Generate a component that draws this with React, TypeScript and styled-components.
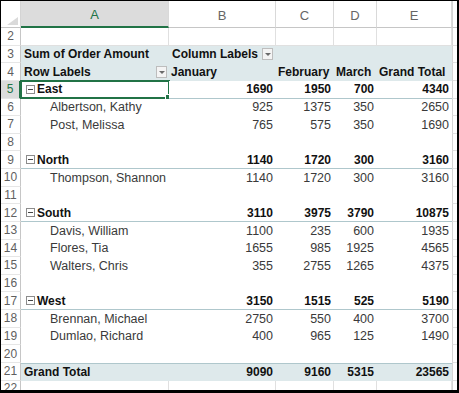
import React from 'react';
import styled, { createGlobalStyle, css } from 'styled-components';

const GlobalStyle = createGlobalStyle`
  html, body {
    margin: 0;
    padding: 0;
    background: #fff;
  }
  body {
    font-family: 'Liberation Sans', Arial, sans-serif;
  }
`;

const COLS = '20px 148px 107px 58px 43px 75px 1fr';
const ROW_H = 17.63;
const GREEN = '#217346';
const BAND = '#dee9eb';
const LINE = '#afc7cc';
const GRID = '#e0e0e0';

type Kind = 'blank' | 'title' | 'head' | 'region' | 'item' | 'empty' | 'total';

type Line = {
  n: number;
  kind: Kind;
  label?: string;
  values?: number[];
};

const lines: Line[] = [
  { n: 2, kind: 'blank' },
  { n: 3, kind: 'title' },
  { n: 4, kind: 'head' },
  { n: 5, kind: 'region', label: 'East', values: [1690, 1950, 700, 4340] },
  { n: 6, kind: 'item', label: 'Albertson, Kathy', values: [925, 1375, 350, 2650] },
  { n: 7, kind: 'item', label: 'Post, Melissa', values: [765, 575, 350, 1690] },
  { n: 8, kind: 'empty' },
  { n: 9, kind: 'region', label: 'North', values: [1140, 1720, 300, 3160] },
  { n: 10, kind: 'item', label: 'Thompson, Shannon', values: [1140, 1720, 300, 3160] },
  { n: 11, kind: 'empty' },
  { n: 12, kind: 'region', label: 'South', values: [3110, 3975, 3790, 10875] },
  { n: 13, kind: 'item', label: 'Davis, William', values: [1100, 235, 600, 1935] },
  { n: 14, kind: 'item', label: 'Flores, Tia', values: [1655, 985, 1925, 4565] },
  { n: 15, kind: 'item', label: 'Walters, Chris', values: [355, 2755, 1265, 4375] },
  { n: 16, kind: 'empty' },
  { n: 17, kind: 'region', label: 'West', values: [3150, 1515, 525, 5190] },
  { n: 18, kind: 'item', label: 'Brennan, Michael', values: [2750, 550, 400, 3700] },
  { n: 19, kind: 'item', label: 'Dumlao, Richard', values: [400, 965, 125, 1490] },
  { n: 20, kind: 'empty' },
  { n: 21, kind: 'total', label: 'Grand Total', values: [9090, 9160, 5315, 23565] },
];

const Frame = styled.div`
  width: 459px;
  height: 393px;
  box-sizing: border-box;
  border-style: solid;
  border-color: #000;
  border-width: 1px 2px 3px 1px;
  overflow: hidden;
  display: flex;
  flex-direction: column;
  background: #fff;
`;

const ColumnBar = styled.div`
  display: grid;
  grid-template-columns: ${COLS};
  height: 27px;
  flex: none;
`;

const Corner = styled.div`
  position: relative;
  box-sizing: border-box;
  border-right: 1px solid #d4d4d4;
  border-bottom: 1px solid #c6c6c6;
  background: #fff;

  &::after {
    content: '';
    position: absolute;
    right: 2px;
    bottom: 2px;
    border-left: 11px solid transparent;
    border-bottom: 8px solid #dadada;
  }
`;

const ColLetter = styled.div<{ $active?: boolean }>`
  box-sizing: border-box;
  display: flex;
  align-items: center;
  justify-content: center;
  padding-top: 2px;
  font-size: 13px;
  color: #666;
  background: #fff;
  border-right: 1px solid #d9d9d9;
  border-bottom: 1px solid #c6c6c6;

  ${(p) =>
    p.$active &&
    css`
      background: #dcdcdc;
      color: ${GREEN};
      border-bottom: 2px solid ${GREEN};
    `}
`;

const Row = styled.div<{ $fill?: boolean }>`
  display: grid;
  grid-template-columns: ${COLS};
  height: ${ROW_H}px;
  flex: none;

  ${(p) =>
    p.$fill &&
    css`
      flex: 1;
      height: auto;
    `}
`;

const RowNum = styled.div<{ $active?: boolean }>`
  box-sizing: border-box;
  display: flex;
  align-items: center;
  justify-content: center;
  font-size: 12px;
  color: #5f5f5f;
  background: #fff;
  border-right: 1px solid #c6c6c6;
  border-bottom: 1px solid #e6e6e6;

  ${(p) =>
    p.$active &&
    css`
      background: #dcdcdc;
      color: ${GREEN};
      border-right: 2px solid ${GREEN};
    `}
`;

const Cell = styled.div<{
  $band?: boolean;
  $bold?: boolean;
  $right?: boolean;
  $indent?: number;
  $grid?: boolean;
  $under?: boolean;
  $over?: boolean;
}>`
  position: relative;
  box-sizing: border-box;
  display: flex;
  align-items: center;
  justify-content: ${(p) => (p.$right ? 'flex-end' : 'flex-start')};
  padding: 0 ${(p) => (p.$right ? 3 : 2)}px 0 ${(p) => p.$indent ?? 3}px;
  white-space: nowrap;
  overflow: visible;
  font-size: ${(p) => (p.$bold ? 12 : 12.5)}px;
  font-weight: ${(p) => (p.$bold ? 700 : 400)};
  color: ${(p) => (p.$bold ? '#111' : '#3a3a3a')};
  background: ${(p) => (p.$band ? BAND : '#fff')};

  ${(p) =>
    p.$grid &&
    css`
      border-right: 1px solid ${GRID};
      border-bottom: 1px solid ${GRID};
    `}
  ${(p) =>
    p.$under &&
    css`
      border-bottom: 1px solid ${LINE};
    `}
  ${(p) =>
    p.$over &&
    css`
      border-top: 1px solid ${LINE};
    `}
`;

const Edge = styled.div`
  box-sizing: border-box;
  border-left: 1px solid #d4d4d4;
  border-bottom: 1px solid ${GRID};
  background: #fff;
`;

const EdgeHead = styled(Edge)`
  border-bottom: 1px solid #c6c6c6;
`;

const Dropdown = styled.span<{ $push?: boolean }>`
  display: inline-flex;
  align-items: center;
  justify-content: center;
  box-sizing: border-box;
  width: 11px;
  height: 12px;
  margin-left: ${(p) => (p.$push ? 'auto' : '4px')};
  border: 1px solid #bdbdbd;
  background: #f4f4f4;

  &::after {
    content: '';
    border-left: 3px solid transparent;
    border-right: 3px solid transparent;
    border-top: 3px solid #6a6a6a;
  }
`;

const Collapse = styled.span`
  position: relative;
  display: inline-block;
  box-sizing: border-box;
  width: 9px;
  height: 9px;
  margin-right: 2px;
  border: 1px solid #8c8c8c;
  background: #fff;

  &::after {
    content: '';
    position: absolute;
    left: 1px;
    right: 1px;
    top: 3px;
    height: 1px;
    background: #444;
  }
`;

const Selection = styled.div`
  position: absolute;
  left: -1px;
  top: -1px;
  right: -1px;
  bottom: -1px;
  border: 2px solid ${GREEN};
  pointer-events: none;

  &::after {
    content: '';
    position: absolute;
    right: -4px;
    bottom: -4px;
    width: 5px;
    height: 5px;
    background: ${GREEN};
    border: 1px solid #fff;
  }
`;

const months = ['January', 'February', 'March', 'Grand Total'];

function PivotRow({ line }: { line: Line }) {
  const { kind } = line;

  if (kind === 'blank') {
    return (
      <>
        <Cell $grid />
        <Cell $grid />
        <Cell $grid />
        <Cell $grid />
        <Cell $grid />
      </>
    );
  }

  if (kind === 'title') {
    return (
      <>
        <Cell $band $bold>Sum of Order Amount</Cell>
        <Cell $band $bold>
          Column Labels
          <Dropdown />
        </Cell>
        <Cell $band />
        <Cell $band />
        <Cell $band />
      </>
    );
  }

  if (kind === 'head') {
    return (
      <>
        <Cell $band $bold>
          Row Labels
          <Dropdown $push />
        </Cell>
        {months.map((m) => (
          <Cell key={m} $band $bold $indent={2}>
            {m}
          </Cell>
        ))}
      </>
    );
  }

  if (kind === 'empty') {
    return (
      <>
        <Cell />
        <Cell />
        <Cell />
        <Cell />
        <Cell />
      </>
    );
  }

  const region = kind === 'region';
  const total = kind === 'total';
  const bold = region || total;

  return (
    <>
      <Cell
        $bold={bold}
        $band={total}
        $over={total}
        $under={region}
        $indent={kind === 'item' ? 29 : region ? 5 : 3}
      >
        {region && <Collapse />}
        {line.label}
        {line.n === 5 && <Selection />}
      </Cell>
      {line.values!.map((v, i) => (
        <Cell key={i} $right $bold={bold} $band={total} $over={total} $under={region}>
          {v}
        </Cell>
      ))}
    </>
  );
}

export default function App() {
  return (
    <>
      <GlobalStyle />
      <Frame>
        <ColumnBar>
          <Corner />
          <ColLetter $active>A</ColLetter>
          <ColLetter>B</ColLetter>
          <ColLetter>C</ColLetter>
          <ColLetter>D</ColLetter>
          <ColLetter>E</ColLetter>
          <EdgeHead />
        </ColumnBar>
        {lines.map((line) => (
          <Row key={line.n}>
            <RowNum $active={line.n === 5}>{line.n}</RowNum>
            <PivotRow line={line} />
            <Edge />
          </Row>
        ))}
        <Row $fill>
          <RowNum>22</RowNum>
          <Cell $grid />
          <Cell $grid />
          <Cell $grid />
          <Cell $grid />
          <Cell $grid />
          <Edge />
        </Row>
      </Frame>
    </>
  );
}
